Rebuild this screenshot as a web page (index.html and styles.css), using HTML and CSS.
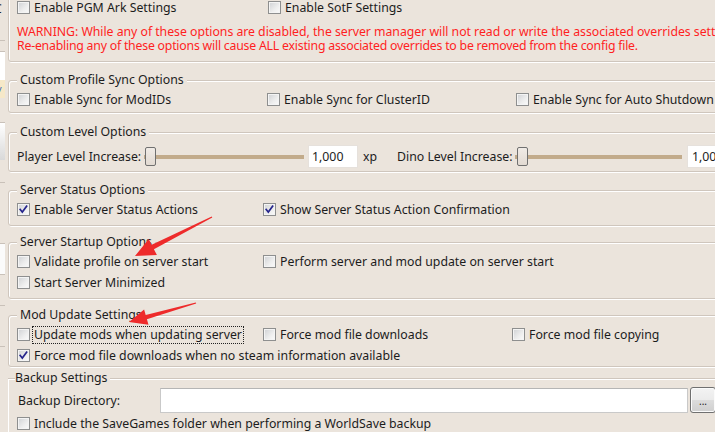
FILE: index.html
```html
<!DOCTYPE html>
<html>
<head>
<meta charset="utf-8">
<link rel="stylesheet" href="styles.css">
</head>
<body>
<div class="page">
  <div class="side">
    <div class="s-c">C</div>
    <div class="s-line"></div>
    <div class="s-gap10"></div>
    <div class="s-line"></div>
    <div class="s-white"></div>
    <div class="s-yellow"><span class="s-mark">v</span></div>
    <div class="s-gap24"></div>
    <div class="s-line"></div>
    <div class="s-grad"></div>
    <div class="s-gap22"></div>
    <div class="s-line"></div>
    <div class="s-gap60"></div>
    <div class="s-line"></div>
    <div class="s-white2"></div>
    <div class="s-line"></div>
    <div class="s-gap30"></div>
    <div class="s-line"></div>
    <div class="s-gap40"></div>
    <div class="s-line"></div>
  </div>

  <div class="main">
    <fieldset class="group g1">
      <div class="grid cols-a">
        <label class="cb"><span class="box"></span><span>Enable PGM Ark Settings</span></label>
        <label class="cb"><span class="box"></span><span>Enable SotF Settings</span></label>
      </div>
      <p class="warn"><span class="w1">WARNING: While any of these options are disabled, the server manager will not read or write the associated overrides settings.</span><br><span class="w2">Re-enabling any of these options will cause ALL existing associated overrides to be removed from the config file.</span></p>
    </fieldset>

    <fieldset class="group g2">
      <legend>Custom Profile Sync Options</legend>
      <div class="grid cols-b">
        <label class="cb"><span class="box"></span><span>Enable Sync for ModIDs</span></label>
        <label class="cb"><span class="box"></span><span>Enable Sync for ClusterID</span></label>
        <label class="cb"><span class="box"></span><span>Enable Sync for Auto Shutdown</span></label>
      </div>
    </fieldset>

    <fieldset class="group g3">
      <legend>Custom Level Options</legend>
      <div class="level">
        <span class="lbl-player">Player Level Increase:</span>
        <div class="slider s-player"><span class="thumb"></span></div>
        <span class="num">1,000</span>
        <span class="xp">xp</span>
        <span class="lbl-dino">Dino Level Increase:</span>
        <div class="slider s-dino"><span class="thumb"></span></div>
        <span class="num num-dino">1,000</span>
      </div>
    </fieldset>

    <fieldset class="group g4">
      <legend>Server Status Options</legend>
      <div class="grid cols-c">
        <label class="cb"><span class="box checked"><svg viewBox="0 0 13 13"><path d="M2.6 6.4 L5.1 9.6 L10.2 2.6"/></svg></span><span>Enable Server Status Actions</span></label>
        <label class="cb"><span class="box checked"><svg viewBox="0 0 13 13"><path d="M2.6 6.4 L5.1 9.6 L10.2 2.6"/></svg></span><span>Show Server Status Action Confirmation</span></label>
      </div>
    </fieldset>

    <fieldset class="group g5">
      <legend>Server Startup Options</legend>
      <div class="grid cols-c">
        <label class="cb"><span class="box"></span><span>Validate profile on server start</span></label>
        <label class="cb"><span class="box"></span><span>Perform server and mod update on server start</span></label>
        <label class="cb newrow"><span class="box"></span><span>Start Server Minimized</span></label>
      </div>
    </fieldset>

    <fieldset class="group g6">
      <legend>Mod Update Settings</legend>
      <div class="grid cols-c">
        <label class="cb"><span class="box"></span><span class="focus">Update mods when updating server</span></label>
        <label class="cb"><span class="box"></span><span>Force mod file downloads</span></label>
        <label class="cb"><span class="box"></span><span>Force mod file copying</span></label>
        <label class="cb span3"><span class="box checked"><svg viewBox="0 0 13 13"><path d="M2.6 6.4 L5.1 9.6 L10.2 2.6"/></svg></span><span>Force mod file downloads when no steam information available</span></label>
      </div>
    </fieldset>

    <fieldset class="group g7">
      <legend>Backup Settings</legend>
      <div class="backup">
        <span class="lbl-backup">Backup Directory:</span>
        <span class="path"></span>
        <span class="btn">...</span>
      </div>
      <div class="grid cols-c bk-row">
        <label class="cb span3"><span class="box"></span><span>Include the SaveGames folder when performing a WorldSave backup</span></label>
      </div>
    </fieldset>
  </div>
</div>

<svg class="arrows" viewBox="0 0 715 432" width="715" height="432">
  <polygon points="212.3,217.6 153.9,249.2 156.9,255.0 135,256 148.7,238.9 151.7,244.7 211.7,216.4"/>
  <polygon points="196.2,303.6 146.9,319.2 148.5,324.8 129,322 144.1,309.4 145.7,315.0 195.8,302.4"/>
</svg>
</body>
</html>
```

FILE: styles.css
```css
* { box-sizing: border-box; }

html, body {
  margin: 0;
  height: 100%;
  overflow: hidden;
}

body {
  position: relative;
  background: #ebe4dc;
  font-family: "Noto Sans", "Open Sans", sans-serif;
  font-size: 12.3px;
  color: #1c1c1c;
}

.page {
  display: flex;
  align-items: flex-start;
}

/* fragment of the neighbouring panel on the left edge */
.side {
  width: 5px;
  flex: none;
  overflow: hidden;
  display: flex;
  flex-direction: column;
}
.s-c { height: 40px; margin-left: -6px; line-height: 16px; padding-top: 1px; }
.s-line { height: 1px; background: #c9c1b9; }
.s-gap10 { height: 10px; }
.s-gap22 { height: 22px; }
.s-gap24 { height: 24px; }
.s-gap30 { height: 30px; }
.s-gap40 { height: 40px; }
.s-gap60 { height: 60px; }
.s-white { height: 28px; background: #fff; }
.s-white2 { height: 30px; background: #fbfbfb; }
.s-yellow { height: 18px; background: #f6e8c8; color: #3060b0; font-size: 9px; line-height: 18px; }
.s-mark { margin-left: -3px; }
.s-grad { height: 37px; background: linear-gradient(#ffffff, #d9d9d9); }

.main {
  flex: 1;
  min-width: 0;
  margin-left: 3px;
  overflow: hidden;
}

/* group boxes */
.group {
  width: 760px;
  min-width: 0;
  margin: 0;
  padding: 0 0 0 8px;
  border: 1px solid #cfc6bd;
  border-radius: 3px;
  box-shadow: inset 1px 1px 0 #fff, 1px 1px 0 #fff;
}

.group legend {
  padding: 0 3px;
  height: 16px;
  line-height: 16px;
  background: #ebe4dc;
  white-space: nowrap;
}

.g1 { margin-top: -12px; padding-top: 8px; padding-bottom: 8px; }
.g2 { margin-top: 10px; padding-top: 1px; padding-bottom: 2px; }
.g3 { margin-top: 11px; padding-top: 4px; padding-bottom: 2px; }
.g4 { margin-top: 10px; padding-top: 1px; padding-bottom: 5px; }
.g5 { margin-top: 8px; padding-top: 1px; padding-bottom: 5px; }
.g6 { margin-top: 8px; padding-top: 1px; padding-bottom: 0; }
.g7 { margin-top: 3px; margin-left: -1px; padding-top: 1px; border-radius: 1px; }
.g7 legend { padding: 0 2px 0 0; margin-left: -1px; }

/* check rows */
.grid { display: grid; grid-auto-rows: 21px; }
.cols-a { grid-template-columns: 251px auto; }
.cols-b { grid-template-columns: 250px 249px auto; }
.cols-c { grid-template-columns: 246px 249px auto; }
.span3 { grid-column: 1 / -1; }
.newrow { grid-column: 1; }

.cb {
  display: flex;
  align-items: center;
  gap: 4px;
  white-space: nowrap;
}

.box {
  flex: none;
  width: 13px;
  height: 13px;
  border: 1px solid #8e8f8f;
  background: linear-gradient(135deg, #cfd1d4 0%, #eeeeee 60%, #fbfbfb 100%);
  box-shadow: inset 0 0 0 1px #f4f4f4;
  display: flex;
}
.box svg { width: 11px; height: 11px; }
.box svg path {
  fill: none;
  stroke: #26258c;
  stroke-width: 2;
  stroke-linecap: square;
}

.focus {
  line-height: 14px;
  outline: 1px dotted #222;
  outline-offset: 1px;
}

.warn {
  margin: 7px 0 0;
  line-height: 14px;
  color: #ff1f1f;
  white-space: nowrap;
}
.w1 { letter-spacing: -0.04px; }
.w2 { letter-spacing: -0.22px; }

/* level sliders */
.level {
  display: flex;
  align-items: center;
  height: 25px;
  white-space: nowrap;
}
.lbl-player { width: 127px; }
.lbl-dino { width: 118px; }
.slider {
  height: 25px;
  display: flex;
  align-items: center;
  background: linear-gradient(#c2ab8b, #c2ab8b) center / 100% 4px no-repeat;
}
.s-player { width: 160px; padding-left: 1px; }
.s-dino { width: 167px; padding-left: 2px; }
.thumb {
  width: 11px;
  height: 19px;
  border: 1px solid #707070;
  border-radius: 2px;
  background: linear-gradient(#f0ebe6, #e2dad2);
}
.num {
  width: 50px;
  height: 23px;
  margin-left: 4px;
  padding-left: 3px;
  line-height: 21px;
  background: #fff;
  border: 1px solid #e6e1dc;
}
.num-dino { margin-left: 5px; padding-left: 4px; }
.xp { width: 34px; margin-left: 5px; }

/* backup */
.backup {
  display: flex;
  align-items: center;
  height: 26px;
  white-space: nowrap;
}
.lbl-backup { width: 144px; padding-left: 2px; }
.path {
  width: 528px;
  height: 25px;
  background: #fff;
  border: 1px solid #c9c9c9;
  border-top-color: #b5b5b5;
}
.btn {
  width: 26px;
  height: 26px;
  margin-left: 2px;
  border: 1px solid #707070;
  border-radius: 3px;
  background: linear-gradient(#f3f3f3 0%, #ebebeb 50%, #dddddd 50%, #cfcfcf 100%);
  box-shadow: inset 0 0 0 1px #fbfbfb;
  font-size: 10px;
  line-height: 26px;
  text-align: center;
  color: #222;
}
.bk-row { padding-left: 1px; }

/* annotation arrows */
.arrows {
  position: absolute;
  left: 0;
  top: 0;
  pointer-events: none;
}
.arrows polygon { fill: #ee2b2b; }
```
